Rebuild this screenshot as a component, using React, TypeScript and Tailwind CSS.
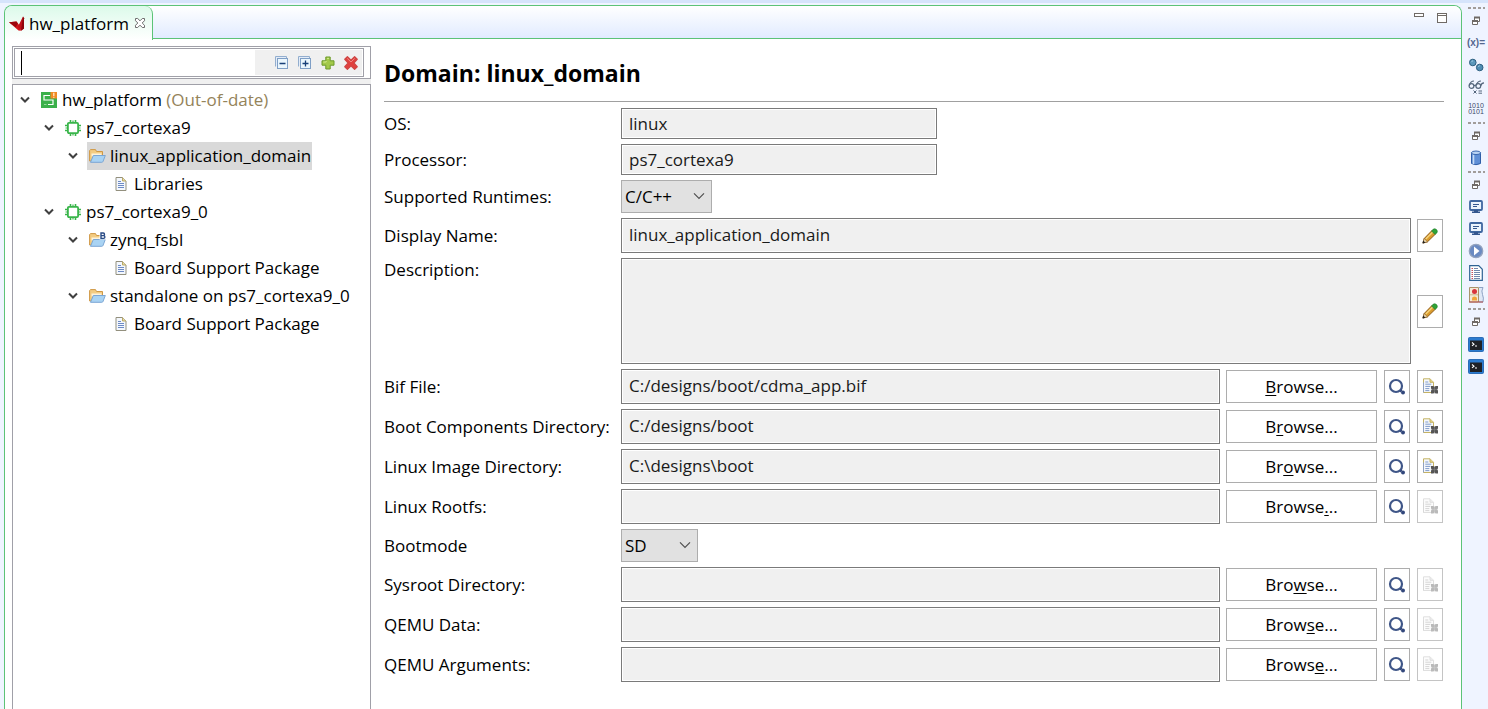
import React from "react";

type IconProps = { className?: string };

/* ---------- icons ---------- */

const XilinxMark = () => (
  <svg width="16" height="16" viewBox="0 0 16 16" aria-hidden="true">
    <path d="M0 6.200 7.500 5.600 10.500 9.500 11.800 14.800 9.500 14.600z" fill="#d3141b" />
    <path d="M0 6.200 7.500 5.600 8.800 7.600 6.800 11.200z" fill="#9c070d" />
    <path d="M14 .500 15 2.200V12.500L12 14.800 9 10.500z" fill="#c01219" />
    <path d="M14 .500 15 2.200V12.500L12 14.800z" fill="#8f060b" />
  </svg>
);

const TabClose = () => (
  <svg width="12" height="12" viewBox="0 0 12 12" fill="#fff" stroke="#6d6d6d" strokeWidth="1" aria-hidden="true">
    <path d="M1.500 1.500h2.200L6 3.800l2.300-2.300h2.200v2.200L8.200 6l2.300 2.300v2.200H8.300L6 8.200l-2.300 2.300H1.500V8.300L3.800 6 1.500 3.700z" />
  </svg>
);

const Minimize = () => (
  <svg width="12" height="14" viewBox="0 0 12 14" aria-hidden="true">
    <rect x="1.500" y="3.500" width="9" height="3" fill="#fff" stroke="#6f6a66" />
  </svg>
);

const Maximize = () => (
  <svg width="12" height="14" viewBox="0 0 12 14" aria-hidden="true">
    <rect x="1.500" y="3.500" width="9" height="9" fill="#fff" stroke="#6f6a66" />
    <path d="M1 5.500h10" stroke="#6f6a66" />
  </svg>
);

const CollapseAll = ({ plus = false }: { plus?: boolean }) => (
  <svg width="14" height="14" viewBox="0 0 14 14" aria-hidden="true">
    <path d="M.5 10.5V.5h11v2" fill="#e3ecf8" stroke="#93aece" />
    <rect x="2.5" y="2.5" width="10" height="10" fill="#eaf6fd" stroke="#7f9fc6" />
    <path d="M4.5 7.5h6" stroke="#173f78" strokeWidth="1.3" />
    {plus && <path d="M7.5 4.5v6" stroke="#173f78" strokeWidth="1.3" />}
  </svg>
);

const AddIcon = () => (
  <svg width="14" height="14" viewBox="0 0 14 14" aria-hidden="true">
    <path d="M4.8 1h4.4v3.8H13v4.4H9.2V13H4.8V9.2H1V4.8h3.8z" fill="#a3c94a" stroke="#6c9a2b" strokeLinejoin="round" />
    <path d="M6 2.4h2M2.3 6h2.9V5.2" stroke="#d6eb8f" fill="none" />
  </svg>
);

const DeleteIcon = () => (
  <svg width="14" height="14" viewBox="0 0 14 14" aria-hidden="true">
    <path d="M3.4.8 7 4.200 10.600.8l2.600 2.400L9.800 7l3.400 3.800-2.600 2.400L7 9.800l-3.600 3.400-2.600-2.400L4.200 7 .8 3.200z" fill="#e2403e" stroke="#d04644" strokeWidth="1.300" strokeLinejoin="round" />
    <path d="M3.200 2.400 7 6l3.700-3.600" stroke="#f08a86" fill="none" />
  </svg>
);

const PlatformIcon = () => (
  <svg width="16" height="16" viewBox="0 0 16 16" aria-hidden="true">
    <path d="M0 0h16v16H0z" fill="#3bb04a" />
    <path d="M9.500 0H16v6.500H9.500z" fill="#f08a24" />
    <path d="M12.800.800v3.200M12.800 4.800v1" stroke="#ffe9c8" strokeWidth="1.300" />
    <path d="M9 3.500H3v4.500h9v4.500H7" fill="none" stroke="#fff" strokeWidth="1.200" />
    <path d="M3 12.500h2.500" stroke="#8fdc96" />
  </svg>
);

const ChipIcon = () => (
  <svg width="16" height="16" viewBox="0 0 16 16" aria-hidden="true">
    <g stroke="#39b54a" fill="none">
      <rect x="2.900" y="2.900" width="10.200" height="10.200" rx="1" strokeWidth="1.800" fill="#fff" />
      <path d="M5.500 0v3M10.500 0v3M5.500 13v3M10.500 13v3M0 5.500h3M0 10.500h3M13 5.500h3M13 10.500h3" strokeWidth="1.600" />
      <path d="M8 .500v2M8 13.500v2M.500 8h2M13.500 8h2" strokeWidth="1.200" />
    </g>
  </svg>
);

const FolderIcon = ({ badge = false }: { badge?: boolean }) => (
  <svg width="17" height="16" viewBox="0 0 17 16" aria-hidden="true">
    <path d="M.6 13V2.600L1.500 1.600h5l1 1.900h6v9.500z" fill="#f3cc82" stroke="#cf9845" />
    <path d="M2.500 5.500h10v3h-10z" fill="#fdf3dc" />
    <path d="M4.300 7.500h12L14 13.500q-.3.800-1.200.800H1.500z" fill="#a9d3f3" stroke="#7ba6d4" />
    {badge && (
      <>
        <path d="M10.500 0H17v7.500h-6.500z" fill="#fff" />
        <path d="M12 1h2.200a1.300 1.300 0 0 1 0 2.600H12zM12 3.600h2.500a1.400 1.400 0 0 1 0 2.800H12z" fill="none" stroke="#2a4b86" strokeWidth="1.400" />
      </>
    )}
  </svg>
);

const PageIcon = () => (
  <svg width="16" height="16" viewBox="0 0 16 16" aria-hidden="true">
    <path d="M3 1.500h6.500l3.500 3.500v9.500H3z" fill="#f3f7fd" stroke="#93907e" />
    <path d="M9.500 1.500v3.500h3.500" fill="#e9dca6" stroke="#b9a966" />
    <path d="M5 5.500h3M5 7.500h6M5 9.500h6M5 11.500h6" stroke="#6d8ac4" />
  </svg>
);

const TreeChevron = () => (
  <svg width="10" height="8" viewBox="0 0 10 8" aria-hidden="true">
    <path d="M1 1.500 5 5.500 9 1.500" fill="none" stroke="#404040" strokeWidth="2" />
  </svg>
);

const SelectChevron = ({ className }: IconProps) => (
  <svg className={className} width="12" height="8" viewBox="0 0 12 8" aria-hidden="true">
    <path d="M1 1.300 6 6.300 11 1.300" fill="none" stroke="#505050" strokeWidth="1.200" />
  </svg>
);

const PencilIcon = () => (
  <svg width="18" height="18" viewBox="0 0 18 18" aria-hidden="true">
    <path d="M2 16 3.200 11.500 11 3.500 14.500 7 6.500 14.800z" fill="#d99a2b" stroke="#8f5b16" />
    <path d="M4.800 12 12 4.800" stroke="#f6d37c" strokeWidth="1.500" />
    <path d="M2 16 3.200 11.500 6.500 14.800z" fill="#f1dcae" stroke="#7d5a2a" strokeWidth=".6" />
    <path d="M1.400 16.600l.9-3 2.100 2.100z" fill="#222" />
    <path d="m10.600 4 1.700-1.900q1.700-1 3.200.5t.5 3.200L14 7.500z" fill="#2fa338" stroke="#1d7a2a" strokeWidth=".6" />
  </svg>
);

const SearchIcon = () => (
  <svg width="18" height="18" viewBox="0 0 18 18" aria-hidden="true">
    <circle cx="8" cy="8" r="6" fill="#fff" stroke="#3f5688" strokeWidth="2.200" />
    <path d="m12.500 12.500 1 1" stroke="#33487c" strokeWidth="2.500" />
    <circle cx="15" cy="14.600" r="2" fill="#33487c" />
  </svg>
);

const ClearIcon = ({ className }: IconProps) => (
  <svg className={className} width="17" height="17" viewBox="0 0 17 17" aria-hidden="true">
    <path d="M1.500.800h6.500l3.500 3.500v10.200h-10z" fill="#f6f8fb" stroke="#c4b263" />
    <path d="M1.500 14.500v-10" stroke="#8fa0bf" />
    <path d="M8 .800v3.500h3.500" fill="#e5d488" stroke="#c4b263" />
    <path d="M3.300 4h3M3.300 6.200h6M3.300 8.400h5M3.300 10.600h4M3.300 12.600h4" stroke="#7f9bcc" />
    <path d="M9 8h2.500l1 1.300 1-1.300H16v2.600L14.800 11.600 16 12.600V15.500h-2.500l-1-1.300-1 1.300H9v-2.900l1.200-1L9 10.600z" fill="#555" />
    <path d="M9 11.600h7M12.500 8v7.500" stroke="#8d8d8d" strokeWidth=".5" />
  </svg>
);

/* ---------- side bar icons ---------- */

const Restore = () => (
  <svg width="10" height="10" viewBox="0 0 10 10" fill="#fff" stroke="#6f6a66" aria-hidden="true">
    <path d="M3.500 1.500h5v4h-5z" />
    <path d="M3 1.500h6" strokeWidth="2" />
    <path d="M1.500 5.500h5v3h-5z" />
    <path d="M1 5h6" strokeWidth="2" />
  </svg>
);

const Variables = () => (
  <span className="font-['Liberation_Sans'] text-[10px] leading-none font-bold text-[#53678f]">(x)=</span>
);

const Breakpoints = () => (
  <svg width="16" height="16" viewBox="0 0 16 16" stroke="#2d5f80" aria-hidden="true">
    <circle cx="4.800" cy="5.500" r="3.300" fill="#5c98bb" />
    <circle cx="11.700" cy="10.500" r="3.300" fill="#4f8db3" />
    <path d="M3.500 4.500 5 3.800M10.200 9.500l1.500-.7" stroke="#a6d0e4" />
  </svg>
);

const Expressions = () => (
  <svg width="17" height="16" viewBox="0 0 17 16" fill="none" stroke="#54667c" strokeWidth="1.200" aria-hidden="true">
    <circle cx="3.500" cy="7" r="2.400" />
    <circle cx="10.300" cy="7" r="2.400" />
    <path d="M1.200 6.500Q2.500 2 6 2M8 6.300Q9.500 2 13 2M5.900 6.700q1-.8 2 0M12.700 6.800Q13.500 3.800 16 3.800" />
    <path d="m5.500 11.500 3 3m0-3-3 3M10.500 12h3.500M10.500 14.200h3.500" strokeWidth="1" />
  </svg>
);

const Registers = () => (
  <span className="text-center font-['Liberation_Sans'] text-[7px] leading-[6px] text-[#3d4a6b]">
    1010
    <br />
    0101
  </span>
);

const Memory = () => (
  <svg width="12" height="16" viewBox="0 0 12 16" aria-hidden="true">
    <path d="M1.500 2.500v11q4.500 2.400 9 0v-11z" fill="#5f8fd6" stroke="#2f5ea8" />
    <path d="M3.500 4v10" stroke="#c6dcf7" strokeWidth="1.600" />
    <ellipse cx="6" cy="2.800" rx="4.500" ry="1.800" fill="#b9d3f3" stroke="#3b69b0" />
  </svg>
);

const Monitor = () => (
  <svg width="14" height="14" viewBox="0 0 14 14" aria-hidden="true">
    <rect x="1" y="1" width="12" height="9" rx="1" fill="#eaf3fc" stroke="#3f67a0" strokeWidth="1.800" />
    <path d="M4 4.500h6M4 6.500h4" stroke="#34578f" />
    <path d="M5 10h4v1.500H5zM3 11.500h8V13H3z" fill="#34578f" />
  </svg>
);

const Play = () => (
  <svg width="16" height="16" viewBox="0 0 16 16" aria-hidden="true">
    <circle cx="8" cy="8" r="6.700" fill="#6a8ac2" stroke="#94a3be" strokeWidth="1.300" />
    <path d="m6 3.500 5.500 4.500L6 12.500z" fill="#fff" />
  </svg>
);

const ListDoc = () => (
  <svg width="14" height="16" viewBox="0 0 14 16" aria-hidden="true">
    <path d="M.700.700h9l3.600 3.600v11H.700z" fill="#fff" stroke="#2e6394" strokeWidth="1.200" />
    <path d="M2.500 3.500h1.500M2.500 5.500h1.500M2.500 7.500h1.500M2.500 9.500h1.500M2.500 11.500h1.500M2.500 13.500h1.500" stroke="#c8505c" />
    <path d="M5 3.500h4M5 5.500h6M5 7.500h6M5 9.500h6M5 11.500h6M5 13.500h6" stroke="#7089ad" />
  </svg>
);

const Lights = () => (
  <svg width="15" height="16" viewBox="0 0 15 16" aria-hidden="true">
    <path d="M.500.500h9v14.500h-9z" fill="#f4ead6" stroke="#a9946c" />
    <path d="M10 .500h4q-2 3.500-.5 7t.5 7.500h-4" fill="#dfe8f6" stroke="#8da2c4" />
    <circle cx="5.500" cy="4.500" r="2.500" fill="#d8343c" />
    <path d="M3 13.500v-2q0-2 2.500-2t2.500 2v2z" fill="#f1a53a" />
    <path d="M1 7.800h8" stroke="#c9b58c" />
    <path d="M0 15h14" stroke="#b04848" />
  </svg>
);

const Terminal = () => (
  <svg width="16" height="15" viewBox="0 0 16 15" aria-hidden="true">
    <rect x=".500" y=".500" width="15" height="14" rx="1" fill="#2b7bd0" stroke="#2b6db8" />
    <path d="M2 3.500h12v9.500H2z" fill="#1f2126" />
    <path d="m4 5.500 2 1.700-2 1.700M7 9h2" fill="none" stroke="#fff" strokeWidth="1.100" />
  </svg>
);

const Handle = () => (
  <svg width="18" height="2" viewBox="0 0 18 2" aria-hidden="true">
    <path d="M1 1h17" stroke="#a19d9a" strokeWidth="2" strokeDasharray="3 2" />
  </svg>
);

/* ---------- navigator ---------- */

type Node = {
  label: string;
  note?: string;
  level: number;
  icon: React.ReactNode;
  leaf?: boolean;
  selected?: boolean;
};

const nodes: Node[] = [
  { label: "hw_platform", note: "(Out-of-date)", level: 0, icon: <PlatformIcon /> },
  { label: "ps7_cortexa9", level: 1, icon: <ChipIcon /> },
  { label: "linux_application_domain", level: 2, icon: <FolderIcon />, selected: true },
  { label: "Libraries", level: 3, icon: <PageIcon />, leaf: true },
  { label: "ps7_cortexa9_0", level: 1, icon: <ChipIcon /> },
  { label: "zynq_fsbl", level: 2, icon: <FolderIcon badge /> },
  { label: "Board Support Package", level: 3, icon: <PageIcon />, leaf: true },
  { label: "standalone on ps7_cortexa9_0", level: 2, icon: <FolderIcon /> },
  { label: "Board Support Package", level: 3, icon: <PageIcon />, leaf: true },
];

const indents = ["pl-[7px]", "pl-[31px]", "pl-[55px]", "pl-[79px]"];

const toolButtons = [
  { label: "Collapse all", icon: <CollapseAll /> },
  { label: "Expand all", icon: <CollapseAll plus /> },
  { label: "Add", icon: <AddIcon /> },
  { label: "Delete", icon: <DeleteIcon /> },
];

const Navigator = () => (
  <nav className="flex w-[359px] shrink-0 flex-col gap-[5px] bg-[#f0f0f0]">
    <div className="border border-[#a0a0a8] bg-white p-px pr-1.5">
      <div className="relative flex h-[29px] border border-[#a0a0a8] bg-white">
        <input aria-label="Filter" className="min-w-0 flex-1 px-1.5 outline-none" />
        <span className="absolute top-0.5 left-1.5 h-6 w-px bg-black" />
        <div className="my-px mr-px flex items-center gap-[9px] bg-[#f0f0f0] pr-1 pl-5">
          {toolButtons.map((b) => (
            <button key={b.label} type="button" aria-label={b.label}>
              {b.icon}
            </button>
          ))}
        </div>
      </div>
    </div>
    <ul role="tree" className="flex-1 border border-b-0 border-[#a0a0a8] bg-white pt-px">
      {nodes.map((n, i) => (
        <li
          key={i}
          role="treeitem"
          aria-level={n.level + 1}
          aria-selected={!!n.selected}
          className={`flex h-7 items-center gap-2 ${indents[n.level]}`}
        >
          <span className="w-[11px]">{!n.leaf && <TreeChevron />}</span>
          <span
            className={`flex h-7 items-center gap-1 pr-px pl-0.5 whitespace-nowrap ${n.selected ? "bg-[#d9d9d9]" : ""}`}
          >
            <span className="flex w-[17px]">{n.icon}</span>
            <span>
              {n.label}
              {n.note && <span className="text-[#94835a]"> {n.note}</span>}
            </span>
          </span>
        </li>
      ))}
    </ul>
  </nav>
);

/* ---------- form ---------- */

const fieldClass =
  "min-w-0 border border-[#7a7a7a] bg-[#f0f0f0] px-[7px] text-[#1a1a1a] shadow-[inset_0_0_0_1px_#fff] outline-none";
const iconButtonClass =
  "flex h-[33px] w-[26px] shrink-0 items-center justify-center border border-[#adadad] bg-white disabled:border-[#c4c4c4]";

const Row = ({ id, label, top, children }: { id: string; label: string; top?: boolean; children: React.ReactNode }) => (
  <div className={`flex ${top ? "items-start" : "items-center"}`}>
    <label htmlFor={id} className="w-[237px] shrink-0 whitespace-nowrap">
      {label}
    </label>
    {children}
  </div>
);

const Combo = ({ id, value, width }: { id: string; value: string; width: string }) => (
  <div className={`relative ${width}`}>
    <select
      id={id}
      defaultValue={value}
      className="block h-[33px] w-full appearance-none border border-[#adadad] bg-[#e1e1e1] pr-6 pl-[3px] outline-none"
    >
      <option>{value}</option>
    </select>
    <SelectChevron className="pointer-events-none absolute top-3 right-[7px]" />
  </div>
);

const PathRow = ({ id, label, value = "", mnemonic }: { id: string; label: string; value?: string; mnemonic: number }) => {
  const text = "Browse...";
  return (
    <Row id={id} label={label}>
      <div className="flex min-w-0 flex-1 items-center">
        <input id={id} readOnly defaultValue={value} className={`${fieldClass} h-[35px] flex-1 pb-0.5`} />
        <button type="button" className="ml-1.5 h-[33px] w-[151px] shrink-0 border border-[#adadad] bg-white">
          {text.slice(0, mnemonic)}
          <span className="underline underline-offset-2">{text[mnemonic]}</span>
          {text.slice(mnemonic + 1)}
        </button>
        <button type="button" aria-label={`Search ${label}`} className={`${iconButtonClass} ml-[7px]`}>
          <SearchIcon />
        </button>
        <button type="button" aria-label={`Clear ${label}`} disabled={!value} className={`${iconButtonClass} mr-px ml-[7px]`}>
          <ClearIcon className={value ? "" : "opacity-40 grayscale"} />
        </button>
      </div>
    </Row>
  );
};

const EditButton = ({ label }: { label: string }) => (
  <button type="button" aria-label={label} className={`${iconButtonClass} mr-px ml-1.5`}>
    <PencilIcon />
  </button>
);

const DomainForm = () => (
  <main className="min-w-0 flex-1 bg-white pr-[17px] pl-[13px]">
    <h1 className="flex h-14 items-center border-b border-[#a0a0a0] pb-0.5 text-[23px] font-bold">Domain: linux_domain</h1>
    <form className="flex flex-col gap-[5px] pt-1.5" onSubmit={(e) => e.preventDefault()}>
      <Row id="os" label="OS:">
        <input id="os" readOnly defaultValue="linux" className={`${fieldClass} h-[31px] w-[316px]`} />
      </Row>
      <Row id="cpu" label="Processor:">
        <input id="cpu" readOnly defaultValue="ps7_cortexa9" className={`${fieldClass} h-[31px] w-[316px]`} />
      </Row>
      <Row id="runtimes" label="Supported Runtimes:">
        <Combo id="runtimes" value="C/C++" width="w-[91px]" />
      </Row>
      <Row id="name" label="Display Name:">
        <input
          id="name"
          readOnly
          defaultValue="linux_application_domain"
          className={`${fieldClass} h-[35px] flex-1 pb-0.5`}
        />
        <EditButton label="Edit display name" />
      </Row>
      <Row id="description" label="Description:" top>
        <textarea id="description" readOnly className={`${fieldClass} h-[106px] flex-1 resize-none`} />
        <div className="self-center">
          <EditButton label="Edit description" />
        </div>
      </Row>
      <PathRow id="bif" label="Bif File:" value="C:/designs/boot/cdma_app.bif" mnemonic={0} />
      <PathRow id="bootdir" label="Boot Components Directory:" value="C:/designs/boot" mnemonic={1} />
      <PathRow id="image" label="Linux Image Directory:" value="C:\designs\boot" mnemonic={2} />
      <PathRow id="rootfs" label="Linux Rootfs:" mnemonic={6} />
      <Row id="bootmode" label="Bootmode">
        <Combo id="bootmode" value="SD" width="w-[77px]" />
      </Row>
      <PathRow id="sysroot" label="Sysroot Directory:" mnemonic={3} />
      <PathRow id="qemudata" label="QEMU Data:" mnemonic={4} />
      <PathRow id="qemuargs" label="QEMU Arguments:" mnemonic={5} />
    </form>
  </main>
);

/* ---------- side bar ---------- */

const groups = [
  [
    { label: "Restore", icon: <Restore /> },
    { label: "Variables", icon: <Variables /> },
    { label: "Breakpoints", icon: <Breakpoints /> },
    { label: "Expressions", icon: <Expressions /> },
    { label: "Registers", icon: <Registers /> },
  ],
  [
    { label: "Restore", icon: <Restore /> },
    { label: "Memory", icon: <Memory /> },
  ],
  [
    { label: "Restore", icon: <Restore /> },
    { label: "Console", icon: <Monitor /> },
    { label: "Debug console", icon: <Monitor /> },
    { label: "Run", icon: <Play /> },
    { label: "Log", icon: <ListDoc /> },
    { label: "Problems", icon: <Lights /> },
  ],
  [
    { label: "Restore", icon: <Restore /> },
    { label: "Terminal", icon: <Terminal /> },
    { label: "Serial terminal", icon: <Terminal /> },
  ],
];

const SideBar = () => (
  <aside className="w-[26px] shrink-0 pt-px pl-0.5">
    {groups.map((g, i) => (
      <div key={i} className="flex flex-col items-center">
        <div className="flex h-[5px] items-center">
          <Handle />
        </div>
        {g.map((item) => (
          <button
            key={item.label}
            type="button"
            aria-label={item.label}
            className="flex h-[22px] w-5 items-center justify-center"
          >
            {item.icon}
          </button>
        ))}
      </div>
    ))}
  </aside>
);

export default function App() {
  return (
    <div className="flex min-h-screen bg-[#eff4ff] bg-[linear-gradient(#d6e4fb,#d6e4fb)] bg-[length:100%_3px] bg-no-repeat pt-1 pl-1 font-['Open_Sans','Noto_Sans',sans-serif] text-[17px] leading-6 text-black">
      <section className="mt-px flex min-w-0 flex-1 flex-col overflow-hidden rounded-t-lg border border-b-0 border-[#5cc377] bg-white">
        <header className="flex h-[33px]">
          <div className="flex h-[34px] w-[148px] shrink-0 items-center rounded-tr-lg border-r border-[#5cc377] bg-linear-to-b from-[#dcfaea] to-white pt-0.5 pl-1 whitespace-nowrap">
            <XilinxMark />
            <span className="ml-1 flex-1">hw_platform</span>
            <button type="button" aria-label="Close tab" className="mr-1.5 pb-0.5">
              <TabClose />
            </button>
          </div>
          <div className="flex flex-1 items-start justify-end gap-[11px] border-b border-[#5cc377] bg-linear-to-b from-white to-[#e1ebff] pt-1 pr-[13px]">
            <button type="button" aria-label="Minimize">
              <Minimize />
            </button>
            <button type="button" aria-label="Maximize">
              <Maximize />
            </button>
          </div>
        </header>
        <div className="flex flex-1 pt-[7px] pl-[7px]">
          <Navigator />
          <DomainForm />
        </div>
      </section>
      <SideBar />
    </div>
  );
}
